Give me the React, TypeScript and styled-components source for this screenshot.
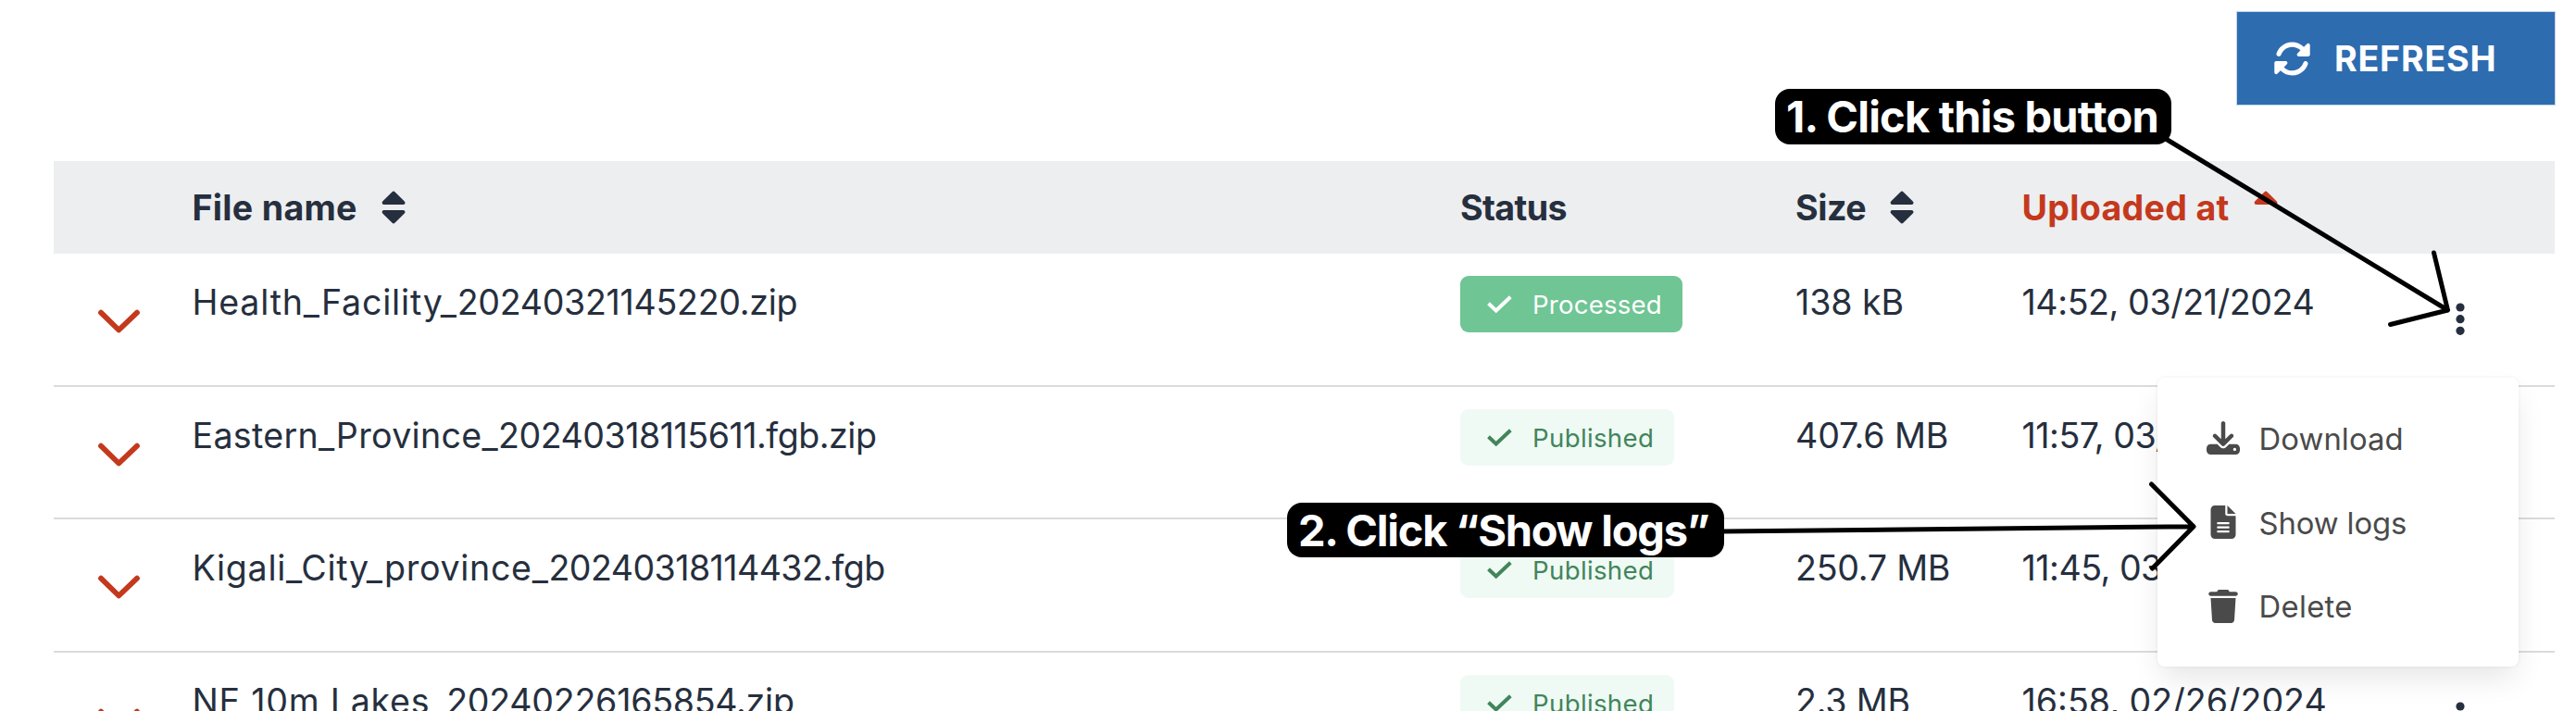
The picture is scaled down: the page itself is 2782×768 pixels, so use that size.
import React from 'react';
import styled, { createGlobalStyle } from 'styled-components';
import { FaDownload, FaFileLines, FaRotate, FaTrash } from 'react-icons/fa6';

const GlobalStyle = createGlobalStyle`
  * { box-sizing: border-box; }
  body { margin: 0; background: #fff; overflow: hidden; }
`;

const Page = styled.main`
  position: relative;
  width: 2782px;
  height: 768px;
  padding: 13px 23px 0 58px;
  overflow: hidden;
  background: #fff;
  color: #262f3e;
  font-family: Inter, "Liberation Sans", sans-serif;
`;

const Toolbar = styled.div`
  display: flex;
  justify-content: flex-end;
  margin-bottom: 61px;
`;

const RefreshButton = styled.button`
  display: flex;
  align-items: center;
  gap: 25px;
  width: 343px;
  height: 100px;
  padding: 0 0 0 39px;
  border: 0;
  background: #2e6cb0;
  box-shadow: 0 0 0 1px #c3d6ea;
  color: #fff;
  font: 700 37.6px Inter, sans-serif;
  letter-spacing: 0.8px;
`;

const columns = '149.5px 1369.5px 362px 244.5px 436px 139px';

const HeaderRow = styled.div`
  display: grid;
  grid-template-columns: ${columns};
  align-items: center;
  height: 100px;
  background: #edeef0;
`;

const HeaderCell = styled.div<{ $active?: boolean; $spacing?: number }>`
  display: flex;
  align-items: center;
  gap: 26px;
  color: ${(p) => (p.$active ? '#c4391d' : 'inherit')};
  font-size: 37.6px;
  font-weight: 700;
  line-height: 48px;
  letter-spacing: ${(p) => p.$spacing ?? 0.3}px;
  white-space: nowrap;
  span { padding-top: 2px; }
`;

const Row = styled.div<{ $height: number }>`
  display: grid;
  grid-template-columns: ${columns};
  align-items: start;
  height: ${(p) => p.$height}px;
  border-bottom: 2px solid #dbdbdb;
`;

const Toggle = styled.div`
  padding: 60px 0 0 47px;
  line-height: 0;
`;

const Text = styled.div<{ $spacing: number }>`
  padding-top: 29px;
  font-size: 37.6px;
  line-height: 48px;
  letter-spacing: ${(p) => p.$spacing}px;
  white-space: pre;
`;

const Stem = styled.span<{ $spacing: number }>`
  letter-spacing: ${(p) => p.$spacing}px;
`;

const Badge = styled.div<{ $solid: boolean }>`
  display: flex;
  align-items: center;
  gap: 22px;
  width: ${(p) => (p.$solid ? 240 : 231)}px;
  height: 61px;
  margin-top: 24px;
  padding: 1px 0 0 28px;
  border-radius: 9px;
  background: ${(p) => (p.$solid ? '#6fc594' : '#effaf4')};
  color: ${(p) => (p.$solid ? '#fff' : '#42855b')};
  font-size: 27.6px;
  letter-spacing: ${(p) => (p.$solid ? 0.2 : 0.35)}px;
`;

const Kebab = styled.div`
  padding: 52px 0 0 31.5px;
  line-height: 0;
`;

const Menu = styled.div`
  position: absolute;
  left: 2330px;
  top: 408px;
  width: 390px;
  height: 312px;
  padding: 20px 0;
  border-radius: 8px;
  background: #fff;
  box-shadow: 0 16px 32px -4px rgba(10, 10, 10, 0.1), 0 0 0 2px rgba(10, 10, 10, 0.02);
  color: #4a4a4a;
`;

const MenuItem = styled.div<{ $spacing: number }>`
  display: grid;
  grid-template-columns: 36px 1fr;
  column-gap: 21px;
  align-items: center;
  height: 90.7px;
  padding-left: 52.5px;
  font-size: 32.8px;
  letter-spacing: ${(p) => p.$spacing}px;
  white-space: nowrap;
  svg { width: 36px; height: 36px; }
  span { padding-top: 1px; }
`;

const Callout = styled.div<{ $x: number; $y: number; $width: number; $spacing: number }>`
  position: absolute;
  left: ${(p) => p.$x}px;
  top: ${(p) => p.$y}px;
  width: ${(p) => p.$width}px;
  height: 59.5px;
  padding-left: 12px;
  border-radius: 16px;
  background: #000;
  color: #fff;
  font-size: 47px;
  font-weight: 700;
  line-height: 59px;
  letter-spacing: ${(p) => p.$spacing}px;
  white-space: nowrap;
`;

const Arrows = styled.svg`
  position: absolute;
  inset: 0;
  pointer-events: none;
`;

const SortIcon = ({ upOnly }: { upOnly?: boolean }) => (
  <svg width="26" height="36" viewBox="0 0 26 36" fill="currentColor" stroke="currentColor" strokeWidth="4" strokeLinejoin="round">
    <path d="M13 2.6L23.4 13H2.6Z" />
    {!upOnly && <path d="M13 33.4L23.4 23H2.6Z" />}
  </svg>
);

const Chevron = () => (
  <svg width="46" height="28" viewBox="0 0 46 28" fill="none" stroke="#c4391d" strokeWidth="5.8" strokeLinecap="round" strokeLinejoin="round">
    <path d="M4 3.7L23.3 22.5L43 3.7" />
  </svg>
);

const Check = () => (
  <svg width="28" height="20" viewBox="0 0 28 20" fill="none" stroke="currentColor" strokeWidth="4">
    <path d="M2.5 8.8L10.7 16.4L26.3 1.7" />
  </svg>
);

const Dots = () => (
  <svg width="12" height="40" viewBox="0 0 12 40" fill="#262f3e">
    <circle cx="6" cy="6" r="4.6" />
    <circle cx="6" cy="18.7" r="4.6" />
    <circle cx="6" cy="31.3" r="4.6" />
  </svg>
);

type FileRow = {
  stem: string; stemSpacing: number;
  stamp: string; stampSpacing: number;
  status: 'Processed' | 'Published';
  size: string; sizeSpacing: number;
  date: string; dateSpacing: number;
  height: number;
};

const files: FileRow[] = [
  { stem: 'Health_Facility_', stemSpacing: 0.8, stamp: '20240321145220.zip', stampSpacing: -0.3, status: 'Processed', size: '138 kB', sizeSpacing: -0.1, date: '14:52, 03/21/2024', dateSpacing: -0.42, height: 144 },
  { stem: 'Eastern_Province_', stemSpacing: 0.33, stamp: '20240318115611.fgb.zip', stampSpacing: -0.5, status: 'Published', size: '407.6 MB', sizeSpacing: -0.1, date: '11:57, 03/18/2024', dateSpacing: -0.5, height: 143 },
  { stem: 'Kigali_City_province_', stemSpacing: 0.7, stamp: '20240318114432.fgb', stampSpacing: -0.58, status: 'Published', size: '250.7 MB', sizeSpacing: -0.25, date: '11:45, 03/18/2024', dateSpacing: -0.5, height: 144 },
  { stem: 'NE 10m Lakes_', stemSpacing: 0.75, stamp: '20240226165854.zip', stampSpacing: -0.27, status: 'Published', size: '2.3 MB', sizeSpacing: -0.2, date: '16:58, 02/26/2024', dateSpacing: 0, height: 144 },
];

export default function App() {
  return (
    <Page>
      <GlobalStyle />
      <Toolbar>
        <RefreshButton><FaRotate size={41} />REFRESH</RefreshButton>
      </Toolbar>
      <HeaderRow>
        <div />
        <HeaderCell><span>File name</span><SortIcon /></HeaderCell>
        <HeaderCell $spacing={-0.6}><span>Status</span></HeaderCell>
        <HeaderCell $spacing={-0.4}><span>Size</span><SortIcon /></HeaderCell>
        <HeaderCell $active><span>Uploaded at</span><SortIcon upOnly /></HeaderCell>
        <div />
      </HeaderRow>
      {files.map((f) => (
        <Row key={f.stamp} $height={f.height}>
          <Toggle><Chevron /></Toggle>
          <Text $spacing={f.stampSpacing}><Stem $spacing={f.stemSpacing}>{f.stem}</Stem>{f.stamp}</Text>
          <Badge $solid={f.status === 'Processed'}><Check />{f.status}</Badge>
          <Text $spacing={f.sizeSpacing}>{f.size}</Text>
          <Text $spacing={f.dateSpacing}>{f.date}</Text>
          <Kebab><Dots /></Kebab>
        </Row>
      ))}
      <Menu>
        <MenuItem $spacing={0.1}><FaDownload /><span>Download</span></MenuItem>
        <MenuItem $spacing={-0.1}><FaFileLines /><span>Show logs</span></MenuItem>
        <MenuItem $spacing={0.3}><FaTrash /><span>Delete</span></MenuItem>
      </Menu>
      <Callout $x={1917} $y={96} $width={428} $spacing={-0.8}>1. Click this button</Callout>
      <Callout $x={1390} $y={542.5} $width={471.5} $spacing={-1.25}>2. Click “Show logs”</Callout>
      <Arrows width="2782" height="768" viewBox="0 0 2782 768" fill="none" stroke="#000" strokeWidth="5" strokeLinecap="round" strokeLinejoin="round">
        <path d="M2339 150L2643.5 335M2628.5 273L2643.5 335L2581.5 350.5" />
        <path d="M1860 574L2369 568.7M2323.5 523L2369 568.7L2324.5 614" />
      </Arrows>
    </Page>
  );
}
